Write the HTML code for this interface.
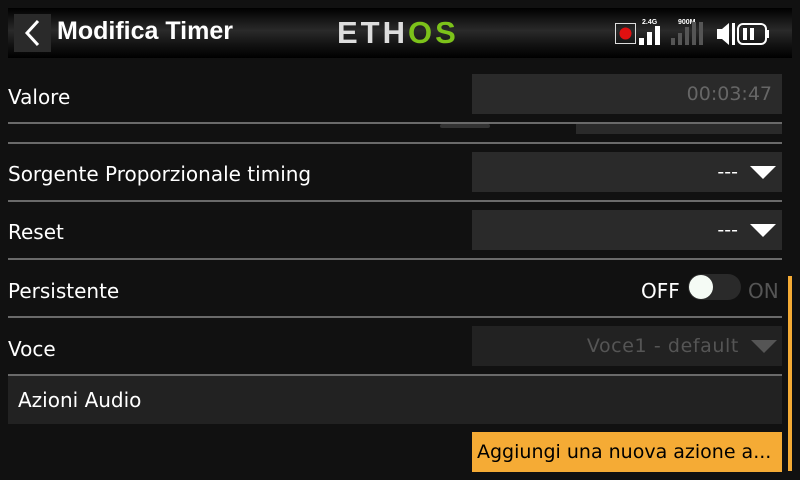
<!DOCTYPE html><html><head><style>
body{margin:0;width:800px;height:480px;background:#111;position:relative;overflow:hidden;font-family:"Liberation Sans","DejaVu Sans",sans-serif;color:#fff}
div{position:absolute;box-sizing:border-box}
.hdr{left:8px;top:8px;width:784px;height:50px;background:linear-gradient(#000 0%,#2a2a2a 45%,#111 75%,#000 100%)}
.line{left:8px;width:774px;height:2px;background:#6a6a6a}
.lbl{left:8px;font-size:20px;font-family:"DejaVu Sans",sans-serif;letter-spacing:0px}
.fld{left:472px;width:310px;height:40px;background:#2a2a2a;font-size:19px;font-family:"DejaVu Sans",sans-serif;text-align:right;line-height:40px}
.tri{width:0;height:0;border-left:13px solid transparent;border-right:13px solid transparent;border-top:13px solid #fff}
</style></head><body>
<div class="hdr"></div>
<div style="left:14px;top:14px;width:37px;height:38px;background:#2a2a2a"></div>
<svg style="position:absolute;left:14px;top:14px" width="37" height="38"><path d="M24 7 L13 19 L24 31" stroke="#fff" stroke-width="3" fill="none"/></svg>
<div style="left:57px;top:17px;font-size:25px;font-weight:bold">Modifica Timer</div>
<div style="left:337px;top:15px;font-size:31px;font-weight:bold;letter-spacing:3px"><span style="color:#ddd">ETH</span><span style="color:#7cc21a">OS</span></div>
<svg style="position:absolute;left:612px;top:18px" width="170" height="30">
<rect x="3.5" y="5.5" width="20" height="20" fill="none" stroke="#ddd"/><circle cx="13.5" cy="15.5" r="6" fill="#e01010"/>
<text x="30" y="6" font-size="7" fill="#fff" font-family="Liberation Sans" font-weight="bold">2.4G</text>
<rect x="27" y="20" width="5" height="7" fill="#fff"/><rect x="35" y="14" width="5" height="13" fill="#fff"/><rect x="43" y="8" width="5" height="19" fill="#fff"/>
<text x="66" y="6" font-size="7" fill="#fff" font-family="Liberation Sans" font-weight="bold">900M</text>
<rect x="59" y="20" width="4" height="7" fill="#555"/><rect x="66" y="15" width="4" height="12" fill="#555"/><rect x="73" y="9" width="4" height="18" fill="#555"/><rect x="80" y="4" width="4" height="23" fill="#555"/><rect x="87" y="4" width="4" height="23" fill="#555"/>
<path d="M105 11 H110 L117 5 V27 L110 21 H105 Z" fill="#fff"/><rect x="120" y="5" width="3" height="22" fill="#fff"/>
<rect x="126" y="6" width="28" height="20" rx="5" fill="none" stroke="#fff" stroke-width="2"/><rect x="154" y="12" width="3" height="8" fill="#fff"/><rect x="131" y="10" width="4" height="12" fill="#fff"/><rect x="138" y="10" width="4" height="12" fill="#fff"/>
</svg>
<div class="lbl" style="top:85px">Valore</div>
<div class="fld" style="top:74px;color:#666;padding-right:10px">00:03:47</div>
<div class="line" style="top:122px"></div>
<div style="left:576px;top:124px;width:206px;height:10px;background:#2a2a2a"></div>
<div style="left:440px;top:124px;width:50px;height:4px;background:#333;border-radius:2px"></div>
<div class="line" style="top:142px"></div>
<div class="lbl" style="top:162px">Sorgente Proporzionale timing</div>
<div class="fld" style="top:152px;padding-right:44px">---</div><div class="tri" style="left:750px;top:166px"></div>
<div class="line" style="top:200px"></div>
<div class="lbl" style="top:220px">Reset</div>
<div class="fld" style="top:210px;padding-right:44px">---</div><div class="tri" style="left:750px;top:224px"></div>
<div class="line" style="top:258px"></div>
<div class="lbl" style="top:279px">Persistente</div>
<div style="left:641px;top:279px;font-size:20px;font-family:'DejaVu Sans',sans-serif">OFF</div>
<div style="left:688px;top:274px;width:53px;height:26px;border-radius:13px;background:#2a2a2a"></div>
<div style="left:689px;top:275px;width:24px;height:24px;border-radius:12px;background:#f5fbf5"></div>
<div style="left:748px;top:279px;font-size:20px;font-family:'DejaVu Sans',sans-serif;color:#555">ON</div>
<div class="line" style="top:316px"></div>
<div class="lbl" style="top:337px">Voce</div>
<div class="fld" style="top:326px;background:#222;color:#555;padding-right:43px;letter-spacing:0.6px">Voce1 - default</div><div class="tri" style="left:751px;top:340px;border-top-color:#555"></div>
<div class="line" style="top:374px"></div>
<div style="left:8px;top:376px;width:774px;height:48px;background:#222"></div>
<div class="lbl" style="left:18px;top:388px">Azioni Audio</div>
<div style="left:472px;top:432px;width:310px;height:40px;background:#f5ab35;color:#000;font-size:19px;font-family:'DejaVu Sans',sans-serif;line-height:40px;padding-left:5px;white-space:nowrap">Aggiungi una nuova azione a...</div>
<div style="left:788px;top:276px;width:4px;height:195px;background:#f5ab35"></div>
</body></html>
